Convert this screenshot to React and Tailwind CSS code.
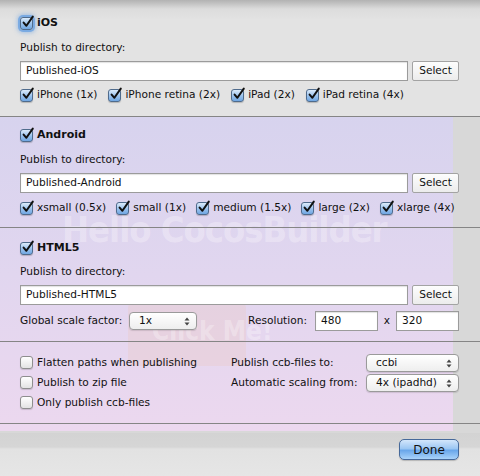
import React from 'react'

const font = "font-['DejaVu_Sans',sans-serif]"

function Check({ checked = true, focus = false }) {
  if (!checked) {
    return (
      <span className="w-[13px] h-[13px] shrink-0 rounded-[3px] border border-[#8e8e8e] bg-gradient-to-b from-[#ffffff] to-[#e3e3e3] shadow-[0_1px_1px_rgba(0,0,0,0.15)]" />
    )
  }
  return (
    <span
      className={
        'relative w-[13px] h-[13px] shrink-0 rounded-[3px] border border-[#4f6b8c] bg-gradient-to-b from-[#dcebfa] via-[#9fc5ee] to-[#6fa6e2] ' +
        (focus ? 'shadow-[0_0_0_2px_rgba(104,160,226,0.75),0_0_4px_3px_rgba(104,160,226,0.5)]' : 'shadow-[0_1px_1px_rgba(0,0,0,0.2)]')
      }
    >
      <svg viewBox="0 0 13 13" className="absolute left-[0px] top-[-2px] w-[13px] h-[13px] overflow-visible">
        <path d="M2.6 6.6 L5.4 9.8 L11.8 0.6" fill="none" stroke="#111" strokeWidth="2" strokeLinecap="round" strokeLinejoin="round" />
      </svg>
    </span>
  )
}

function Item({ label, checked = true }) {
  return (
    <span className="flex items-center gap-[4px] whitespace-nowrap">
      <Check checked={checked} />
      <span>{label}</span>
    </span>
  )
}

function TextField({ value, className = '' }) {
  return (
    <div className={'h-[20px] flex items-center bg-white border border-[#9b9b9b] shadow-[inset_0_1px_1px_rgba(0,0,0,0.12)] pl-[5px] ' + className}>
      {value}
    </div>
  )
}

function SelectButton() {
  return (
    <div className="w-[47px] h-[20px] flex items-center justify-center border border-[#a3a3a3] bg-gradient-to-b from-[#fdfdfd] to-[#ececec] rounded-[2px]">
      Select
    </div>
  )
}

function Popup({ value, className = '' }) {
  return (
    <div className={'h-[18px] flex items-center justify-between pl-[9px] pr-[6px] rounded-[4px] border border-[#9a9a9a] bg-gradient-to-b from-[#ffffff] to-[#eeeeee] shadow-[0_1px_1px_rgba(0,0,0,0.12)] ' + className}>
      <span>{value}</span>
      <svg width="6" height="9" viewBox="0 0 6 9">
        <path d="M0.5 3.5 L3 0.5 L5.5 3.5 Z" fill="#444" />
        <path d="M0.5 5.5 L3 8.5 L5.5 5.5 Z" fill="#444" />
      </svg>
    </div>
  )
}

function Separator() {
  return <div className="h-px bg-[#858585]" />
}

function DirectoryBlock({ value }) {
  return (
    <>
      <div className="h-[14px] flex items-center">Publish to directory:</div>
      <div className="flex gap-[4px] mt-[6px]">
        <TextField value={value} className="flex-1" />
        <SelectButton />
      </div>
    </>
  )
}

function Header({ label, focus = false }) {
  return (
    <div className="h-[14px] flex items-center gap-[4px]">
      <Check focus={focus} />
      <span className="font-bold text-[11px]">{label}</span>
    </div>
  )
}

export default function App() {
  return (
    <div className={'relative w-[480px] h-[476px] overflow-hidden bg-[#d8d8d8] text-[10.6px] text-[#111] ' + font}>
      {/* the canvas behind the sheet */}
      <div className="absolute left-0 top-[116px] w-[453px] h-[315px] bg-gradient-to-b from-[#d7d3ee] via-[#e1d6ef] to-[#ecd8ef] overflow-hidden">
        <div className="absolute left-[62px] top-[96px] text-[36px] leading-none font-bold tracking-[-1px] text-white/30 font-['DejaVu_Sans_Condensed',sans-serif] whitespace-nowrap">
          Hello CocosBuilder
        </div>
        <div className="absolute left-[128px] top-[186px] w-[118px] h-[64px] rounded-[6px] bg-[#f3b28a]/15" />
        <div className="absolute left-[152px] top-[202px] text-[26px] leading-none font-bold text-white/30 font-['DejaVu_Sans_Condensed',sans-serif] whitespace-nowrap">
          Click Me!
        </div>
      </div>

      <div className="relative flex flex-col">
        <section className="bg-[linear-gradient(#b2b2b2,#dcdcdc_9px,#e3e3e3_20px)] pl-[20px] pr-[21px] pt-[16px] pb-[14px]">
          <Header label="iOS" focus />
          <div className="mt-[11px]">
            <DirectoryBlock value="Published-iOS" />
          </div>
          <div className="h-[14px] mt-[7px] flex items-center gap-[11px]">
            <Item label="iPhone (1x)" />
            <Item label="iPhone retina (2x)" />
            <Item label="iPad (2x)" />
            <Item label="iPad retina (4x)" />
          </div>
        </section>
        <Separator />

        <section className="pl-[20px] pr-[21px] pt-[11px] pb-[12px]">
          <Header label="Android" />
          <div className="mt-[11px]">
            <DirectoryBlock value="Published-Android" />
          </div>
          <div className="h-[14px] mt-[8px] flex items-center gap-[10px]">
            <Item label="xsmall (0.5x)" />
            <Item label="small (1x)" />
            <Item label="medium (1.5x)" />
            <Item label="large (2x)" />
            <Item label="xlarge (4x)" />
          </div>
        </section>
        <Separator />

        <section className="pl-[20px] pr-[21px] pt-[13px] pb-[10px]">
          <Header label="HTML5" />
          <div className="mt-[10px]">
            <DirectoryBlock value="Published-HTML5" />
          </div>
          <div className="h-[20px] mt-[6px] flex items-center">
            <span className="w-[109px]">Global scale factor:</span>
            <Popup value="1x" className="w-[68px]" />
            <span className="ml-auto mr-[8px]">Resolution:</span>
            <TextField value="480" className="w-[63px]" />
            <span className="w-[18px] text-center">x</span>
            <TextField value="320" className="w-[63px]" />
          </div>
        </section>
        <Separator />

        <section className="pl-[20px] pr-[21px] pt-[11px] pb-[10px] flex">
          <div className="w-[211px] flex flex-col">
            <div className="h-[20px] flex items-center"><Item label="Flatten paths when publishing" checked={false} /></div>
            <div className="h-[20px] flex items-center"><Item label="Publish to zip file" checked={false} /></div>
            <div className="h-[20px] flex items-center"><Item label="Only publish ccb-files" checked={false} /></div>
          </div>
          <div className="flex-1 flex flex-col">
            <div className="h-[20px] flex items-center">
              <span className="w-[135px]">Publish ccb-files to:</span>
              <Popup value="ccbi" className="w-[93px]" />
            </div>
            <div className="h-[20px] flex items-center">
              <span className="w-[135px]">Automatic scaling from:</span>
              <Popup value="4x (ipadhd)" className="w-[93px]" />
            </div>
          </div>
        </section>
        <Separator />

        <div className="h-[9px]" />
        <div className="h-[45px] bg-[linear-gradient(#d3d3d3,#d6d6d6_14px,#e2e2e2_16px,#e6e6e6)] flex justify-end items-start pt-[6px] pr-[21px]">
          <button className="w-[60px] h-[21px] rounded-[5px] border border-[#46699a] bg-[linear-gradient(#d3e6fb,#9cc7f3_45%,#6aa7ea_55%,#a9d3fa)] text-[12px] text-[#111] shadow-[0_1px_1px_rgba(0,0,0,0.2)]">
            Done
          </button>
        </div>
      </div>
    </div>
  )
}
